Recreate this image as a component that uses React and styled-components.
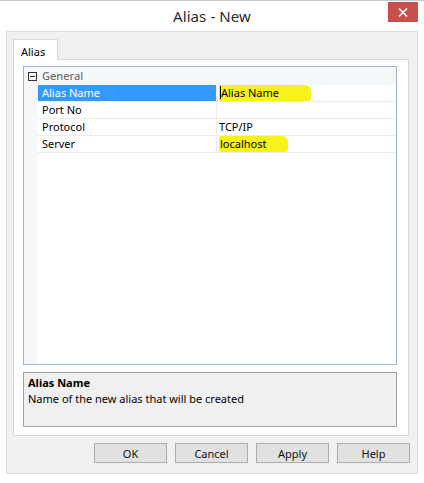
import React from 'react';
import styled, { createGlobalStyle } from 'styled-components';

const GlobalStyle = createGlobalStyle`
  html, body {
    margin: 0;
    padding: 0;
    background: #ffffff;
  }
  body {
    font-family: 'Noto Sans', 'Liberation Sans', sans-serif;
    font-size: 11px;
    color: #000;
  }
`;

const Window = styled.div`
  width: 424px;
  height: 483px;
  box-sizing: border-box;
  background: #ffffff;
  border-top: 1px solid #c9c9c9;
  display: flex;
  flex-direction: column;
`;

const TitleBar = styled.div`
  height: 30px;
  display: grid;
  grid-template-columns: 1fr auto 1fr;
  align-items: start;
`;

const Title = styled.div`
  grid-column: 2;
  padding-top: 5px;
  font-size: 15px;
  color: #2b2b2b;
  letter-spacing: 0.1px;
`;

const CloseButton = styled.div`
  grid-column: 3;
  justify-self: end;
  margin: 1px 6px 0 0;
  width: 30px;
  height: 20px;
  background: #c7504b;
  display: flex;
  align-items: center;
  justify-content: center;
`;

const Body = styled.div`
  margin: 0 6px;
  height: 443px;
  box-sizing: border-box;
  background: #f0f0f0;
  border: 1px solid #dcdcdc;
  display: flex;
  flex-direction: column;
`;

const TabStrip = styled.div`
  display: flex;
  padding: 7px 0 0 6px;
`;

const Tab = styled.div`
  width: 45px;
  height: 21px;
  box-sizing: border-box;
  background: #ffffff;
  border: 1px solid #d9d9d9;
  border-bottom: none;
  margin-bottom: -1px;
  padding: 4px 0 0 7px;
  position: relative;
  z-index: 1;
`;

const TabPage = styled.div`
  margin: 0 8px 0 6px;
  height: 377px;
  box-sizing: border-box;
  background: #ffffff;
  border: 1px solid #d9d9d9;
  padding: 6px 11px 8px 9px;
  display: flex;
  flex-direction: column;
`;

const Grid = styled.div`
  height: 299px;
  box-sizing: border-box;
  border: 1px solid #a3b5ca;
  background: linear-gradient(to right, #f5f8fb 0 14px, #ffffff 14px);
  display: flex;
  flex-direction: column;
`;

const Row = styled.div`
  height: ${({ header }) => (header ? 18 : 17)}px;
  display: grid;
  grid-template-columns: 14px 179px 1fr;
  line-height: 16px;
  background: ${({ header }) => (header ? '#f5f8fb' : 'transparent')};
`;

const Gutter = styled.div`
  display: flex;
  align-items: center;
  justify-content: center;
`;

const Toggle = styled.div`
  width: 7px;
  height: 7px;
  border: 1px solid #333;
  position: relative;
  margin-left: 2px;

  &::after {
    content: '';
    position: absolute;
    left: 1px;
    top: 3px;
    width: 5px;
    height: 1px;
    background: #333;
  }
`;

const HeaderLabel = styled.div`
  grid-column: 2 / 4;
  padding: 1px 0 0 4px;
  color: #6d6d6d;
  font-weight: 500;
`;

const NameCell = styled.div`
  padding: 0 0 0 4px;
  border-bottom: 1px solid #ececec;
  border-right: 1px solid #ececec;
  background: ${({ selected }) => (selected ? '#3399ff' : '#ffffff')};
  color: ${({ selected }) => (selected ? '#ffffff' : '#000')};
  white-space: nowrap;
`;

const ValueCell = styled.div`
  padding: 0 0 0 2px;
  border-bottom: 1px solid #ececec;
  background: #ffffff;
  white-space: nowrap;
  display: flex;
`;

const Marker = styled.span`
  display: inline-block;
  height: 16px;
  padding: 0 ${({ tail }) => tail}px 0 1px;
  background: #f8f21a;
  border-radius: 1px 6px 3px 1px;
  line-height: 16px;
`;

const Caret = styled.span`
  display: inline-block;
  width: 1px;
  height: 13px;
  background: #000;
  vertical-align: -2px;
`;

const Description = styled.div`
  margin-top: 7px;
  height: 55px;
  box-sizing: border-box;
  background: #f0f0f0;
  border: 1px solid #a0a0a0;
  padding: 2px 4px;
  line-height: 16px;
`;

const DescTitle = styled.div`
  font-weight: 700;
`;

const ButtonBar = styled.div`
  display: flex;
  justify-content: flex-end;
  gap: 8px;
  padding: 7px 7px 0 0;
`;

const Button = styled.div`
  width: 73px;
  height: 20px;
  box-sizing: border-box;
  background: #e1e1e1;
  border: 1px solid #adadad;
  display: flex;
  align-items: center;
  justify-content: center;
  color: #111;
`;

const rows = [
  { name: 'Alias Name', value: 'Alias Name', selected: true, marked: 32, caret: true },
  { name: 'Port No', value: '' },
  { name: 'Protocol', value: 'TCP/IP' },
  { name: 'Server', value: 'localhost', marked: 22 },
];

export default function App() {
  return (
    <>
      <GlobalStyle />
      <Window>
        <TitleBar>
          <Title>Alias - New</Title>
          <CloseButton>
            <svg width="10" height="9" viewBox="0 0 10 9">
              <path d="M1 0.5 L9 8.5 M9 0.5 L1 8.5" stroke="#fff" strokeWidth="1.6" />
            </svg>
          </CloseButton>
        </TitleBar>
        <Body>
          <TabStrip>
            <Tab>Alias</Tab>
          </TabStrip>
          <TabPage>
            <Grid>
              <Row header>
                <Gutter>
                  <Toggle />
                </Gutter>
                <HeaderLabel>General</HeaderLabel>
              </Row>
              {rows.map((row) => (
                <Row key={row.name}>
                  <Gutter />
                  <NameCell selected={row.selected}>{row.name}</NameCell>
                  <ValueCell>
                    {row.marked ? (
                      <Marker tail={row.marked}>
                        {row.caret && <Caret />}
                        {row.value}
                      </Marker>
                    ) : (
                      row.value
                    )}
                  </ValueCell>
                </Row>
              ))}
            </Grid>
            <Description>
              <DescTitle>Alias Name</DescTitle>
              <div>Name of the new alias that will be created</div>
            </Description>
          </TabPage>
          <ButtonBar>
            <Button>OK</Button>
            <Button>Cancel</Button>
            <Button>Apply</Button>
            <Button>Help</Button>
          </ButtonBar>
        </Body>
      </Window>
    </>
  );
}
